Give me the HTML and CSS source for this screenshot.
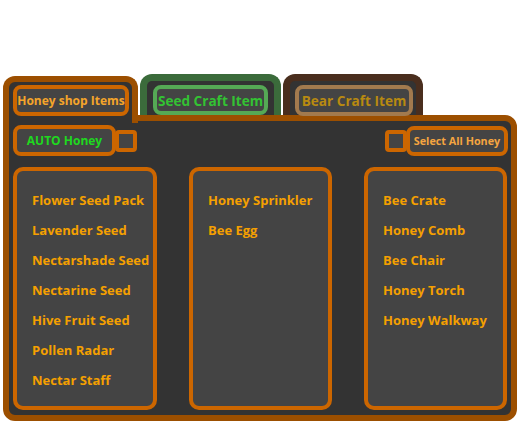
FILE: index.html
```html
<!DOCTYPE html>
<html>
<head>
<meta charset="utf-8">
<link rel="stylesheet" href="styles.css">
</head>
<body>
<div class="window">
  <div class="tabs">
    <div class="tab tab-honey"><div class="tab-btn">Honey shop Items</div></div>
    <div class="tab tab-seed"><div class="tab-btn">Seed Craft Item</div></div>
    <div class="tab tab-bear"><div class="tab-btn">Bear Craft Item</div></div>
  </div>
  <div class="panel">
    <div class="toolbar">
      <div class="toggle">
        <div class="btn btn-auto">AUTO Honey</div>
        <div class="check"></div>
      </div>
      <div class="toggle">
        <div class="check check-left"></div>
        <div class="btn btn-select">Select All Honey</div>
      </div>
    </div>
    <div class="lists">
      <ul class="list">
        <li>Flower Seed Pack</li>
        <li>Lavender Seed</li>
        <li>Nectarshade Seed</li>
        <li>Nectarine Seed</li>
        <li>Hive Fruit Seed</li>
        <li>Pollen Radar</li>
        <li>Nectar Staff</li>
      </ul>
      <ul class="list">
        <li>Honey Sprinkler</li>
        <li>Bee Egg</li>
      </ul>
      <ul class="list">
        <li>Bee Crate</li>
        <li>Honey Comb</li>
        <li>Bee Chair</li>
        <li>Honey Torch</li>
        <li>Honey Walkway</li>
      </ul>
    </div>
  </div>
</div>
</body>
</html>
```

FILE: styles.css
```css
* { box-sizing: border-box; }
html, body { margin: 0; padding: 0; background: #ffffff; }
body {
  font-family: "Open Sans", "Noto Sans", "DejaVu Sans", sans-serif;
  font-weight: 700;
}
.window {
  padding-top: 74px;
  padding-left: 3px;
  width: 520px;
}
.tabs {
  display: flex;
  align-items: flex-end;
  height: 41px;
}
.tab {
  background: #333333;
  border-style: solid;
  border-bottom: 0;
  border-radius: 12px 12px 0 0;
}
.tab-btn {
  background: #444444;
  border-style: solid;
  border-width: 4px;
  border-radius: 8px;
  display: flex;
  align-items: center;
  justify-content: center;
  white-space: nowrap;
}
.tab-honey {
  position: relative;
  z-index: 1;
  width: 135px;
  height: 47px;
  margin-bottom: -8px;
  border-width: 6px;
  border-color: #9c4f00;
  padding: 3px 0 0 4px;
}
.tab-honey .tab-btn {
  width: 116px;
  height: 31px;
  border-color: #cc6600;
  color: #f5a52a;
  font-size: 12px;
}
.tab-seed {
  width: 141px;
  height: 41px;
  margin-left: 2px;
  border-width: 7px;
  border-color: #3b6b3b;
  padding: 4px 0 0 6px;
}
.tab-seed .tab-btn {
  width: 115px;
  height: 30px;
  border-color: #55a955;
  color: #33c233;
  font-size: 13.6px;
}
.tab-bear {
  width: 140px;
  height: 41px;
  margin-left: 2px;
  border-width: 7px;
  border-color: #4a2e1e;
  padding: 4px 0 0 5px;
}
.tab-bear .tab-btn {
  width: 118px;
  height: 31px;
  border-color: #a27a4e;
  color: #b88a10;
  font-size: 13.6px;
}
.panel {
  width: 514px;
  height: 306px;
  background: #333333;
  border: 6px solid #9c4f00;
  border-radius: 0 12px 12px 12px;
  padding: 4px 3px 5px 4px;
}
.toolbar {
  display: flex;
  justify-content: space-between;
  align-items: center;
  height: 31px;
}
.toggle {
  display: flex;
  align-items: center;
}
.btn {
  background: #444444;
  border: 4px solid #cc6600;
  border-radius: 8px;
  display: flex;
  align-items: center;
  justify-content: center;
  white-space: nowrap;
}
.btn-auto {
  width: 103px;
  height: 31px;
  color: #1fd81f;
  font-size: 12px;
}
.btn-select {
  width: 102px;
  height: 30px;
  color: #f5a540;
  font-size: 10.8px;
}
.check {
  width: 22px;
  height: 22px;
  background: #444444;
  border: 4px solid #cc6600;
  border-radius: 4px;
  margin-left: -1px;
}
.check-left {
  margin-left: 0;
  margin-right: -1px;
}
.lists {
  margin-top: 11px;
  display: grid;
  grid-template-columns: 144px 143px 143px;
  justify-content: space-between;
  width: 494px;
}
.list {
  list-style: none;
  margin: 0;
  height: 243px;
  background: #444444;
  border: 4px solid #cc6600;
  border-radius: 10px;
  padding: 14px 0 0 15px;
}
.list li {
  line-height: 30px;
  height: 30px;
  font-size: 13px;
  color: #f5a000;
  white-space: nowrap;
}
```
